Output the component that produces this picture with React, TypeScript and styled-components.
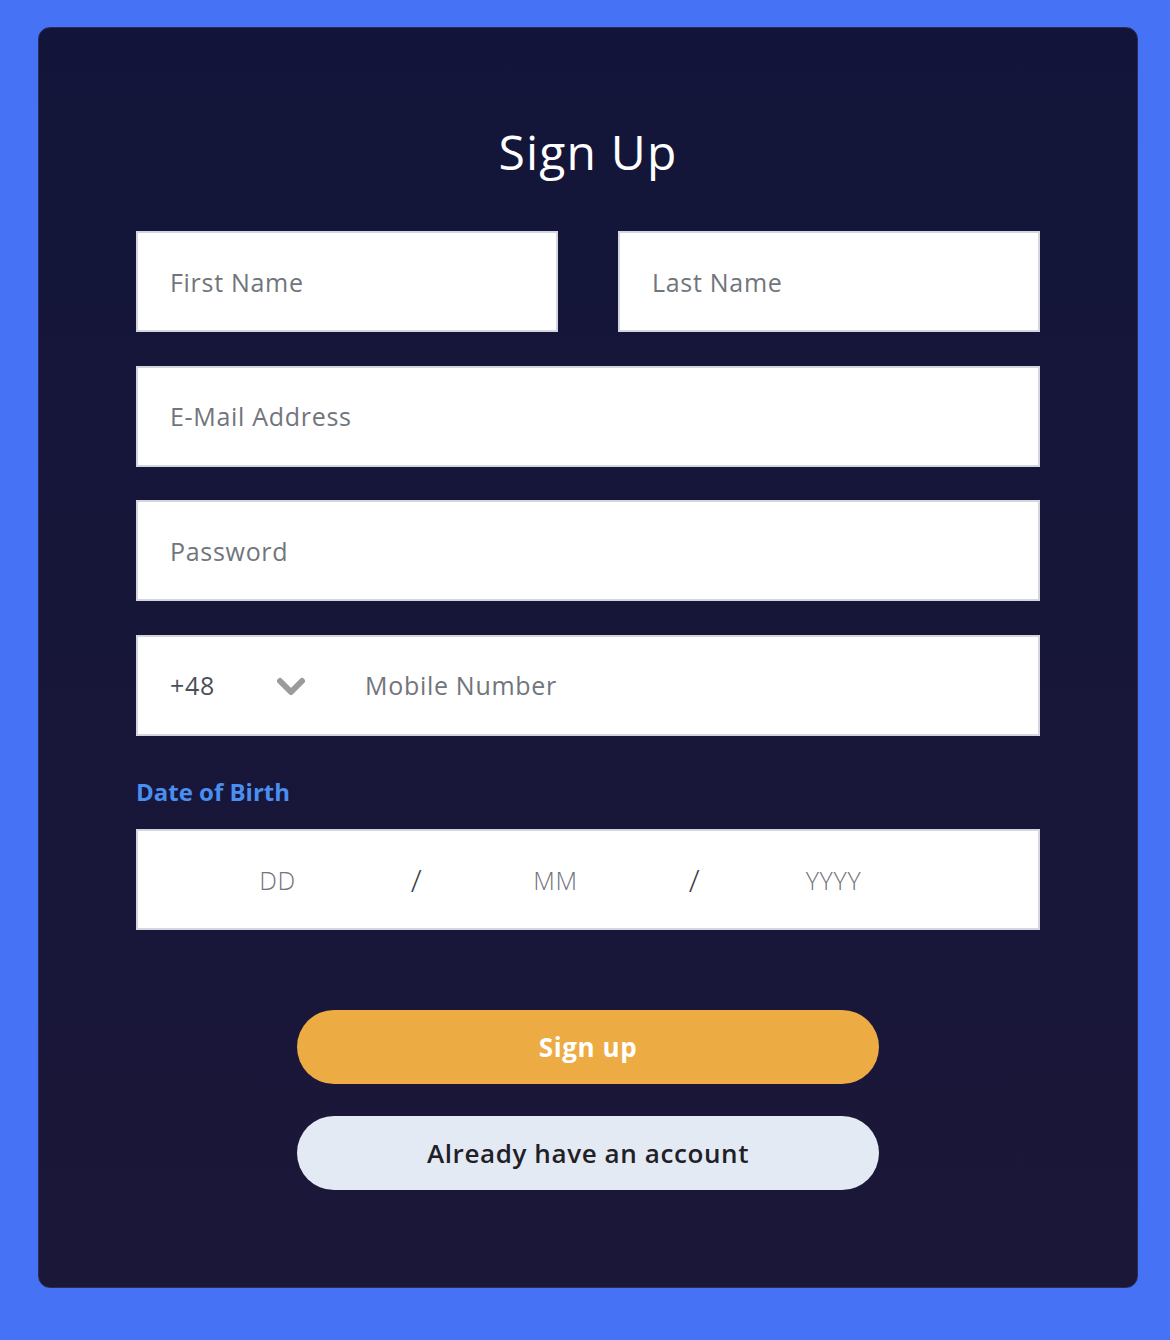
import React from 'react';
import styled, { createGlobalStyle } from 'styled-components';

const GlobalStyle = createGlobalStyle`
    * { box-sizing: border-box; }
    html, body {
        margin: 0;
        padding: 0;
        background: #4672f5;
        font-family: "Open Sans", "Noto Sans", sans-serif;
    }
`;

const Page = styled.div`
    min-height: 1340px;
    padding: 27px 32px 52px 38px;
`;

const Card = styled.form`
    width: 1100px;
    height: 1261px;
    border-radius: 12px;
    border: 1px solid #2a2c52;
    background: linear-gradient(180deg, #121539 0%, #1b1739 100%);
    padding: 93px 97px 0;
    display: flex;
    flex-direction: column;
`;

const Title = styled.h1`
    margin: 0 0 48px;
    text-align: center;
    color: #ffffff;
    font-size: 48px;
    font-weight: 500;
    line-height: 62px;
    letter-spacing: 1.2px;
`;

const Row = styled.div`
    display: flex;
    gap: 60px;
    margin-bottom: 33.5px;
`;

const Field = styled.div`
    flex: 1;
    height: 101px;
    background: #ffffff;
    border: 2px solid #d3d6de;
    display: flex;
    align-items: center;
    padding: 0 30px;
`;

const TextInput = styled.input`
    flex: 1;
    min-width: 0;
    border: none;
    outline: none;
    background: transparent;
    font-family: inherit;
    font-size: 25px;
    letter-spacing: 0.7px;
    color: #333;

    &::placeholder {
        color: #71757c;
    }
`;

const Code = styled.span`
    font-size: 25px;
    letter-spacing: 0.7px;
    color: #4b4f56;
    width: 108px;
    padding-left: 2px;
`;

const Chevron = styled.svg`
    width: 30px;
    height: 20px;
    margin-right: 57px;
    margin-top: 4px;
`;

const Label = styled.div`
    color: #4a8ff0;
    font-size: 24px;
    font-weight: 700;
    margin: 6px 0 21px;
`;

const DateField = styled.div`
    height: 101px;
    background: #ffffff;
    border: 2px solid #d3d6de;
    display: flex;
    align-items: center;
    padding-left: 70px;
`;

const DatePart = styled.span<{ $slash?: boolean }>`
    width: 139px;
    text-align: center;
    font-size: ${(p) => (p.$slash ? '32px' : '25px')};
    letter-spacing: 0.7px;
    font-weight: 300;
    color: ${(p) => (p.$slash ? '#3a3d44' : '#71757c')};
`;

const Buttons = styled.div`
    display: flex;
    flex-direction: column;
    align-items: center;
    gap: 32px;
    margin-top: 80px;
`;

const Button = styled.button<{ $primary?: boolean }>`
    width: 582px;
    height: 74px;
    border: none;
    border-radius: 37px;
    font-family: inherit;
    font-size: 26px;
    letter-spacing: 0.6px;
    font-weight: ${(p) => (p.$primary ? 700 : 600)};
    background: ${(p) => (p.$primary ? '#edab44' : '#e4eaf4')};
    color: ${(p) => (p.$primary ? '#ffffff' : '#1f2126')};
    cursor: pointer;
`;

const App = () => {
    return (
        <>
            <GlobalStyle />
            <Page>
                <Card onSubmit={(e) => e.preventDefault()}>
                    <Title>Sign Up</Title>
                    <Row>
                        <Field>
                            <TextInput placeholder="First Name" />
                        </Field>
                        <Field>
                            <TextInput placeholder="Last Name" />
                        </Field>
                    </Row>
                    <Row>
                        <Field>
                            <TextInput placeholder="E-Mail Address" />
                        </Field>
                    </Row>
                    <Row>
                        <Field>
                            <TextInput type="password" placeholder="Password" />
                        </Field>
                    </Row>
                    <Row>
                        <Field>
                            <Code>+48</Code>
                            <Chevron viewBox="0 0 30 20">
                                <path
                                    d="M4 4 L15 15 L26 4"
                                    fill="none"
                                    stroke="#9b9b9b"
                                    strokeWidth="6"
                                    strokeLinecap="round"
                                    strokeLinejoin="round"
                                />
                            </Chevron>
                            <TextInput placeholder="Mobile Number" />
                        </Field>
                    </Row>
                    <Label>Date of Birth</Label>
                    <DateField>
                        <DatePart>DD</DatePart>
                        <DatePart $slash>/</DatePart>
                        <DatePart>MM</DatePart>
                        <DatePart $slash>/</DatePart>
                        <DatePart>YYYY</DatePart>
                    </DateField>
                    <Buttons>
                        <Button type="submit" $primary>Sign up</Button>
                        <Button type="button">Already have an account</Button>
                    </Buttons>
                </Card>
            </Page>
        </>
    );
};

export default App;
